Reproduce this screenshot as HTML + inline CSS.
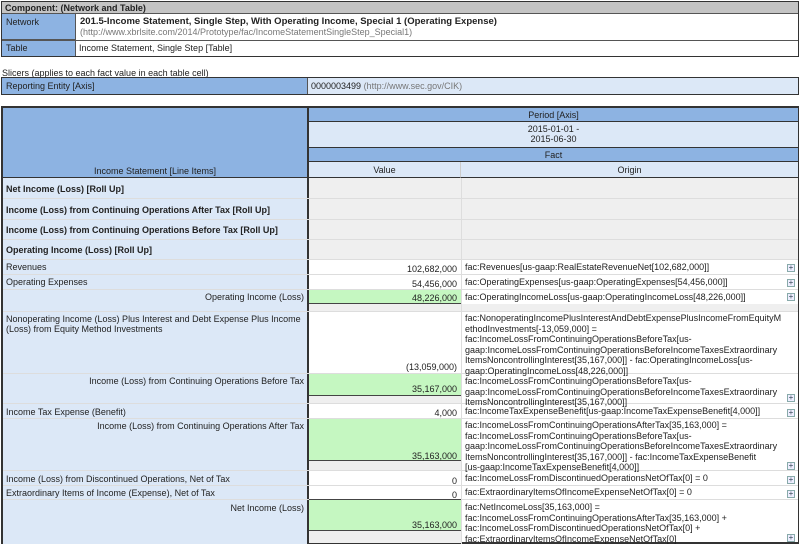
<!DOCTYPE html>
<html><head><meta charset="utf-8"><style>
body{margin:0;width:800px;height:544px;background:#fff;font-family:"Liberation Sans",Arial,sans-serif;font-size:9px;color:#222;position:relative;overflow:hidden}
div{box-sizing:border-box}
.a{position:absolute}
.lb{background:#dce8f7}
.db{background:#8db3e2}
.gr{background:#efefef}
.gn{background:#c5f7c1}
.pl{position:absolute;right:5px;width:8px;height:8px;border:1px solid #8aa;background:#eef;font-size:8px;line-height:6px;text-align:center;color:#345}
</style></head><body>
<!-- component -->
<div class="a" style="left:1px;top:1px;width:798px;height:56px;border:1px solid #333"></div>
<div class="a" style="left:2px;top:2px;width:796px;height:12px;background:#c4c4c4;font-weight:bold;padding-left:3px;line-height:12px;border-bottom:1px solid #555">Component: (Network and Table)</div>
<div class="a db" style="left:2px;top:14px;width:74px;height:26px;padding:3px 0 0 4px;border-right:1px solid #555;border-bottom:1px solid #555">Network</div>
<div class="a" style="left:80px;top:16px;font-weight:bold;font-size:9.5px">201.5-Income Statement, Single Step, With Operating Income, Special 1 (Operating Expense)</div>
<div class="a" style="left:80px;top:27px;color:#777">(http://www.xbrlsite.com/2014/Prototype/fac/IncomeStatementSingleStep_Special1)</div>
<div class="a" style="left:2px;top:40px;width:796px;height:1px;background:#555"></div>
<div class="a db" style="left:2px;top:41px;width:74px;height:15px;padding:2px 0 0 4px;border-right:1px solid #555">Table</div>
<div class="a" style="left:79px;top:43px">Income Statement, Single Step [Table]</div>
<!-- slicers -->
<div class="a" style="left:2px;top:68px">Slicers (applies to each fact value in each table cell)</div>
<div class="a" style="left:1px;top:77px;width:798px;height:18px;border:1px solid #333"></div>
<div class="a db" style="left:2px;top:78px;width:306px;height:16px;padding:3px 0 0 4px;border-right:1px solid #555">Reporting Entity [Axis]</div>
<div class="a lb" style="left:308px;top:78px;width:490px;height:16px;padding:3px 0 0 3px">0000003499 <span style="color:#777">(http://www.sec.gov/CIK)</span></div>
<!-- main table -->
<div class="a" style="left:1px;top:106px;width:798px;height:438px;border:2px solid #333;border-right-width:1px"></div>
<div class="a db" style="left:3px;top:108px;width:304px;height:70px;border-bottom:1px solid #333"></div>
<div class="a" style="left:3px;top:166px;width:304px;text-align:center">Income Statement [Line Items]</div>
<div class="a" style="left:307px;top:106px;width:2px;height:438px;background:#333"></div>
<div class="a db" style="left:309px;top:108px;width:489px;height:14px;text-align:center;line-height:14px;border-bottom:1px solid #333">Period [Axis]</div>
<div class="a lb" style="left:309px;top:122px;width:489px;height:25px;text-align:center;padding-top:2px;line-height:10px">2015-01-01 -<br>2015-06-30</div>
<div class="a db" style="left:309px;top:147px;width:489px;height:15px;text-align:center;line-height:15px;border-top:1px solid #333;border-bottom:1px solid #333">Fact</div>
<div class="a lb" style="left:309px;top:162px;width:152px;height:16px;text-align:center;line-height:16px;border-right:1px solid #ccc;border-bottom:1px solid #333">Value</div>
<div class="a lb" style="left:461px;top:162px;width:337px;height:16px;text-align:center;line-height:16px;border-bottom:1px solid #333">Origin</div>

<!-- left column rows -->
<div class="a lb" style="left:3px;top:178px;width:304px;height:366px"></div>
<div class="a" style="left:3px;top:178px;width:795px;height:366px">
</div>
<!-- right area bg segments -->
<div class="a gr" style="left:309px;top:178px;width:489px;height:81px"></div>
<div class="a gr" style="left:309px;top:304px;width:489px;height:7px"></div>
<div class="a gn" style="left:309px;top:289px;width:152px;height:15px;border-bottom:1px solid #444"></div>
<div class="a gn" style="left:309px;top:373px;width:152px;height:23px;border-bottom:1px solid #444"></div>
<div class="a gr" style="left:309px;top:396px;width:152px;height:7px"></div>
<div class="a gn" style="left:309px;top:418px;width:152px;height:43px;border-bottom:1px solid #444"></div>
<div class="a gr" style="left:309px;top:461px;width:152px;height:9px"></div>
<div class="a gn" style="left:309px;top:500px;width:152px;height:31px;border-bottom:1px solid #444"></div>
<div class="a gr" style="left:309px;top:531px;width:152px;height:12px"></div>
<div class="a" style="left:461px;top:178px;width:1px;height:366px;background:#ddd"></div>
<!-- horizontal row lines -->
<div class="a" style="left:3px;top:198px;width:795px;height:1px;background:#ddd"></div>
<div class="a" style="left:3px;top:219px;width:795px;height:1px;background:#ddd"></div>
<div class="a" style="left:3px;top:239px;width:795px;height:1px;background:#ddd"></div>
<div class="a" style="left:3px;top:259px;width:795px;height:1px;background:#ddd"></div>
<div class="a" style="left:3px;top:274px;width:795px;height:1px;background:#ddd"></div>
<div class="a" style="left:3px;top:289px;width:795px;height:1px;background:#ddd"></div>
<div class="a" style="left:3px;top:311px;width:795px;height:1px;background:#ddd"></div>
<div class="a" style="left:3px;top:373px;width:795px;height:1px;background:#ddd"></div>
<div class="a" style="left:3px;top:403px;width:795px;height:1px;background:#ddd"></div>
<div class="a" style="left:3px;top:418px;width:795px;height:1px;background:#ddd"></div>
<div class="a" style="left:3px;top:470px;width:795px;height:1px;background:#ddd"></div>
<div class="a" style="left:3px;top:485px;width:795px;height:1px;background:#ddd"></div>
<div class="a" style="left:309px;top:499px;width:152px;height:1px;background:#444"></div>
<div class="a" style="left:3px;top:499px;width:306px;height:1px;background:#ddd"></div>
<div class="a" style="left:461px;top:499px;width:337px;height:1px;background:#ddd"></div>

<!-- left labels -->
<div class="a" style="left:6px;top:184px;font-weight:bold">Net Income (Loss) [Roll Up]</div>
<div class="a" style="left:6px;top:205px;font-weight:bold">Income (Loss) from Continuing Operations After Tax [Roll Up]</div>
<div class="a" style="left:6px;top:225px;font-weight:bold">Income (Loss) from Continuing Operations Before Tax [Roll Up]</div>
<div class="a" style="left:6px;top:245px;font-weight:bold">Operating Income (Loss) [Roll Up]</div>
<div class="a" style="left:6px;top:262px">Revenues</div>
<div class="a" style="left:6px;top:277px">Operating Expenses</div>
<div class="a" style="right:496px;top:292px">Operating Income (Loss)</div>
<div class="a" style="left:6px;top:314px;width:300px;line-height:10px">Nonoperating Income (Loss) Plus Interest and Debt Expense Plus Income (Loss) from Equity Method Investments</div>
<div class="a" style="right:496px;top:376px">Income (Loss) from Continuing Operations Before Tax</div>
<div class="a" style="left:6px;top:407px">Income Tax Expense (Benefit)</div>
<div class="a" style="right:496px;top:421px">Income (Loss) from Continuing Operations After Tax</div>
<div class="a" style="left:6px;top:474px">Income (Loss) from Discontinued Operations, Net of Tax</div>
<div class="a" style="left:6px;top:488px">Extraordinary Items of Income (Expense), Net of Tax</div>
<div class="a" style="right:496px;top:503px">Net Income (Loss)</div>

<!-- values -->
<div class="a" style="right:343px;top:264px">102,682,000</div>
<div class="a" style="right:343px;top:279px">54,456,000</div>
<div class="a" style="right:343px;top:293px">48,226,000</div>
<div class="a" style="right:343px;top:362px">(13,059,000)</div>
<div class="a" style="right:343px;top:384px">35,167,000</div>
<div class="a" style="right:343px;top:408px">4,000</div>
<div class="a" style="right:343px;top:451px">35,163,000</div>
<div class="a" style="right:343px;top:476px">0</div>
<div class="a" style="right:343px;top:490px">0</div>
<div class="a" style="right:343px;top:520px">35,163,000</div>

<!-- origins -->
<div style="position:absolute;left:465px;width:300px;line-height:10.5px;font-size:9px">
<div class="a" style="top:262px;white-space:nowrap">fac:Revenues[us-gaap:RealEstateRevenueNet[102,682,000]]</div>
<div class="a" style="top:277px;white-space:nowrap">fac:OperatingExpenses[us-gaap:OperatingExpenses[54,456,000]]</div>
<div class="a" style="top:292px;white-space:nowrap">fac:OperatingIncomeLoss[us-gaap:OperatingIncomeLoss[48,226,000]]</div>
<div class="a" style="top:313px;white-space:nowrap">fac:NonoperatingIncomePlusInterestAndDebtExpensePlusIncomeFromEquityM<br>ethodInvestments[-13,059,000] =<br>fac:IncomeLossFromContinuingOperationsBeforeTax[us-<br>gaap:IncomeLossFromContinuingOperationsBeforeIncomeTaxesExtraordinary<br>ItemsNoncontrollingInterest[35,167,000]] - fac:OperatingIncomeLoss[us-<br>gaap:OperatingIncomeLoss[48,226,000]]</div>
<div class="a" style="top:376px;white-space:nowrap">fac:IncomeLossFromContinuingOperationsBeforeTax[us-<br>gaap:IncomeLossFromContinuingOperationsBeforeIncomeTaxesExtraordinary<br>ItemsNoncontrollingInterest[35,167,000]]</div>
<div class="a" style="top:406px;white-space:nowrap">fac:IncomeTaxExpenseBenefit[us-gaap:IncomeTaxExpenseBenefit[4,000]]</div>
<div class="a" style="top:420px;white-space:nowrap">fac:IncomeLossFromContinuingOperationsAfterTax[35,163,000] =<br>fac:IncomeLossFromContinuingOperationsBeforeTax[us-<br>gaap:IncomeLossFromContinuingOperationsBeforeIncomeTaxesExtraordinary<br>ItemsNoncontrollingInterest[35,167,000]] - fac:IncomeTaxExpenseBenefit<br>[us-gaap:IncomeTaxExpenseBenefit[4,000]]</div>
<div class="a" style="top:473px;white-space:nowrap">fac:IncomeLossFromDiscontinuedOperationsNetOfTax[0] = 0</div>
<div class="a" style="top:487px;white-space:nowrap">fac:ExtraordinaryItemsOfIncomeExpenseNetOfTax[0] = 0</div>
<div class="a" style="top:502px;white-space:nowrap">fac:NetIncomeLoss[35,163,000] =<br>fac:IncomeLossFromContinuingOperationsAfterTax[35,163,000] +<br>fac:IncomeLossFromDiscontinuedOperationsNetOfTax[0] +<br>fac:ExtraordinaryItemsOfIncomeExpenseNetOfTax[0]</div>
</div>
<!-- plus icons -->
<div class="pl" style="top:264px">+</div>
<div class="pl" style="top:279px">+</div>
<div class="pl" style="top:293px">+</div>
<div class="pl" style="top:394px">+</div>
<div class="pl" style="top:409px">+</div>
<div class="pl" style="top:462px">+</div>
<div class="pl" style="top:476px">+</div>
<div class="pl" style="top:490px">+</div>
<div class="pl" style="top:534px">+</div>
</body></html>
